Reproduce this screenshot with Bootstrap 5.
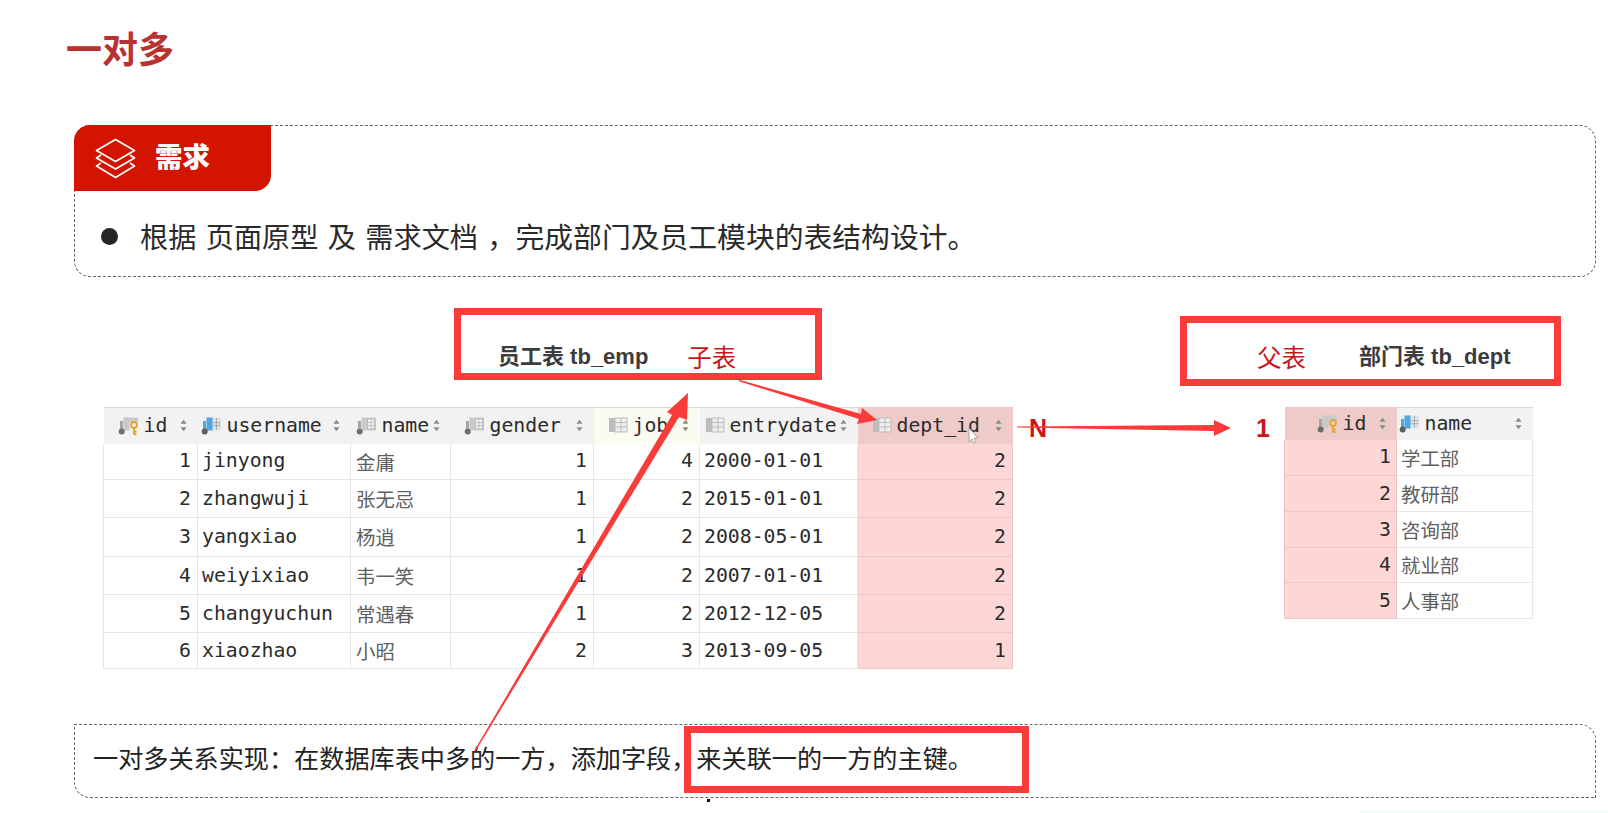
<!doctype html>
<html lang="zh">
<head>
<meta charset="utf-8">
<title>一对多</title>
<link rel="stylesheet" href="https://cdn.jsdelivr.net/npm/bootstrap@5.3.0/dist/css/bootstrap.min.css">
<style>
html,body{height:100%}
body{background:#fff;color:#222;font-family:"Liberation Sans","Noto Sans CJK SC",sans-serif;overflow:hidden}
.slide{position:relative;width:1608px;height:813px;padding:0 12px 0 74px}
.slide-title{height:125px;margin:0 0 0 -8px;padding-top:26px;font:700 36px/1.2 "Noto Sans CJK SC",sans-serif;color:#b93232}
.dash-box{border:1px dashed #666;border-radius:16px}
.need-box{height:152px}
.need-tab{width:197px;height:66px;margin:-1px 0 0 -1px;background:#d21400;color:#fff;border-radius:16px 0 16px 0;padding-left:21px;gap:19px}
.need-tab b{font:900 27.5px/1 "Noto Sans CJK SC",sans-serif;padding-bottom:4px}
.need-body{height:85px;padding:6px 0 0 26px;gap:22px;font:400 28.8px/1 "Noto Sans CJK SC",sans-serif;color:#2a2a2a}
.need-lead{font-size:28.2px;word-spacing:3px}
.need-dot{width:17px;height:17px;border-radius:50%;background:#262626;flex:none}
.label-row{margin:31px 0 0 380px;height:78px}
.red-box{border:7px solid #fb3a3a;flex:none}
.box-emp{width:368px;height:72px;padding:27px 0 0 37px}
.box-dept{width:381px;height:70px;margin:8px 0 0 358px;padding:12px 0 0 70px}
.tname{font:700 22px/1.4 "Liberation Sans","Noto Sans CJK SC",sans-serif;color:#3c3c3c}
.tkind{font:400 24.5px/1.4 "Noto Sans CJK SC",sans-serif;color:#c8161d}
.box-emp .tkind{margin-left:39px}
.box-dept .tname{margin-left:53px}
.tables-row{margin:21px 0 0 29px;height:261px}
.db-table{table-layout:fixed;border-collapse:collapse;font:400 19.8px/1 "DejaVu Sans Mono",monospace;color:#2b2b2b;background:#fff;flex:none}
.db-table th{padding:0;font-weight:400;background:#f2f2f2;border-top:1px solid #d8d8d8}
.db-table td{padding:0;border:1px solid #e6e6e6;border-top:0}
.db-table td.num{text-align:right;padding-right:6px}
.db-table td.txt{padding-left:4px}
.db-table td.cjk{padding-left:5px;font:400 19.4px/1 "Noto Sans CJK SC",sans-serif;color:#5f5f5f}
.db-table .pk{background:#fdd7d5;border-color:#f2c4c2}
.db-table th.pk{background:#eecbc8}
.db-table th.job-h{background:#fbfbf1}
.head-in{display:flex;align-items:center;padding-right:11px}
.head-in svg{flex:none}
.head-in .ico{margin-right:5px}
.head-in .srt{margin-left:auto}
.emp-tb{width:909px}
.dept-tb{width:248px}
.c94{width:94px}.c153{width:153px}.c100{width:100px}.c143{width:143px}.c106{width:106px}.c158{width:158px}.c155{width:155px}
.c112{width:112px}.c136{width:136px}
.pl2{padding-left:2px}.pl3{padding-left:3px}.pl5{padding-left:5px}.pl13{padding-left:13px}.pl14{padding-left:14px}.pl32{padding-left:32px}
.emp-tb thead tr{height:36px}
.emp-tb tbody tr:nth-child(1){height:36px}
.emp-tb tbody tr:nth-child(2){height:38px}
.emp-tb tbody tr:nth-child(3){height:39px}
.emp-tb tbody tr:nth-child(4){height:38px}
.emp-tb tbody tr:nth-child(5){height:38px}
.emp-tb tbody tr:nth-child(6){height:36px}
.dept-tb thead tr{height:32px}
.dept-tb tbody tr{height:36px}
.dept-tb tbody tr:nth-child(4){height:35px}
.dept-tb td.cjk{padding-left:4px}
.dept-tb td.num{padding-right:5px}
.gap-zone{width:271px;flex:none;height:36px;padding:9px 0 0 16px;color:#c8161d;font:700 25px/1 "Liberation Sans",sans-serif}
.gap-zone .one{margin-left:209px}
.note-box{height:74px;margin-top:56px;padding:0 0 6px 18px;font:400 25.15px/1 "Noto Sans CJK SC",sans-serif;color:#222;border-radius:0 16px 0 16px}
.overlay{position:absolute;left:0;top:0;pointer-events:none}
.note-mark{position:absolute;left:684px;top:726px;width:345px;height:67px}
.tiny-dot{position:absolute;left:707px;top:799px;width:3px;height:3px;background:#111}
.tint-strip{position:absolute;left:1360px;top:810px;width:248px;height:3px;background:#f3fefc}
</style>
</head>
<body>
<svg width="0" height="0" class="d-block">
<defs>
<symbol id="i-col" viewBox="0 0 20 18"><rect x="5" y="0.5" width="14.5" height="13" fill="#c9c9c9"/><rect x="11" y="2" width="7" height="10" fill="#f4f4f4" stroke="#b5b5b5" stroke-width=".8"/><path d="M11 5.500h7M11 8.700h7M14.500 2v10" stroke="#b5b5b5" stroke-width=".8"/><circle cx="3.200" cy="14.500" r="3" fill="#6e6e6e"/><rect x="1.500" y="4" width="3" height="8" fill="#a5a5a5"/></symbol>
<symbol id="i-colb" viewBox="0 0 20 18"><rect x="5" y="0.500" width="14.500" height="13" fill="#dfe3e8"/><rect x="5" y="0.500" width="6" height="13" fill="#4fa8e0"/><path d="M11 5.500h8M11 8.700h8M15 1v12" stroke="#9aa3ab" stroke-width=".8"/><rect x="1.500" y="4" width="3" height="8" fill="#4fa8e0"/><circle cx="3.200" cy="14.500" r="3" fill="#5f5f5f"/></symbol>
<symbol id="i-key" viewBox="0 0 20 18"><rect x="5" y="0.500" width="14.500" height="5" fill="#c9c9c9"/><rect x="5" y="0.500" width="6" height="13" fill="#c9c9c9"/><rect x="1.500" y="4" width="3" height="8" fill="#a5a5a5"/><circle cx="3.200" cy="14.500" r="3" fill="#6e6e6e"/><circle cx="15.500" cy="8" r="3" fill="none" stroke="#e6a32e" stroke-width="1.8"/><path d="M15.500 11v6.500M15.500 14.500h2.500M15.500 17h2.500" stroke="#e6a32e" stroke-width="1.8" fill="none"/></symbol>
<symbol id="i-tb" viewBox="0 0 20 18"><rect x="1" y="1" width="6" height="14" fill="#bdbdbd"/><rect x="7" y="1" width="12" height="14" fill="#eee" stroke="#bdbdbd"/><path d="M7 5.500h12M7 10h12M13 1v14" stroke="#bdbdbd"/></symbol>
<symbol id="i-srt" viewBox="0 0 8 14"><path d="M4 0.500 7.500 5H.5zM4 13.500.5 9h7z" fill="#8a8a8a"/></symbol>
</defs>
</svg>
<main class="slide">
  <h1 class="slide-title">一对多</h1>

  <section class="dash-box need-box">
    <div class="need-tab d-flex align-items-center">
      <svg width="41" height="41" viewBox="0 0 41 41" fill="none" stroke="#fff" stroke-width="1.7" stroke-linejoin="round"><path d="M20.500 1.500 39.500 12.500 20.500 23.500 1.500 12.500Z"/><path d="M6 17 1.500 20 20.500 31 39.500 20 35 17"/><path d="M6 25 1.500 28 20.500 39.500 39.500 28 35 25"/></svg>
      <b>需求</b>
    </div>
    <div class="need-body d-flex align-items-center">
      <span class="need-dot"></span>
      <span><span class="need-lead">根据 页面原型 及 需求文档 ，</span>完成部门及员工模块的表结构设计。</span>
    </div>
  </section>

  <div class="label-row d-flex align-items-start">
    <div class="red-box box-emp d-flex align-items-center"><span class="tname">员工表 tb_emp</span><span class="tkind">子表</span></div>
    <div class="red-box box-dept d-flex align-items-center"><span class="tkind">父表</span><span class="tname">部门表 tb_dept</span></div>
  </div>

  <div class="tables-row d-flex align-items-start">
    <table class="db-table emp-tb">
      <colgroup><col class="c94"><col class="c153"><col class="c100"><col class="c143"><col class="c106"><col class="c158"><col class="c155"></colgroup>
      <thead><tr>
        <th><div class="head-in pl14"><svg class="ico" width="21" height="18"><use href="#i-key"/></svg>id<svg class="srt" width="7" height="13"><use href="#i-srt"/></svg></div></th>
        <th><div class="head-in pl3"><svg class="ico" width="21" height="18"><use href="#i-colb"/></svg>username<svg class="srt" width="7" height="13"><use href="#i-srt"/></svg></div></th>
        <th><div class="head-in pl5"><svg class="ico" width="21" height="18"><use href="#i-col"/></svg>name<svg class="srt" width="7" height="13"><use href="#i-srt"/></svg></div></th>
        <th><div class="head-in pl13"><svg class="ico" width="21" height="18"><use href="#i-col"/></svg>gender<svg class="srt" width="7" height="13"><use href="#i-srt"/></svg></div></th>
        <th class="job-h"><div class="head-in pl14"><svg class="ico" width="20" height="18"><use href="#i-tb"/></svg>job<svg class="srt" width="7" height="13"><use href="#i-srt"/></svg></div></th>
        <th><div class="head-in pl5"><svg class="ico" width="20" height="18"><use href="#i-tb"/></svg>entrydate<svg class="srt" width="7" height="13"><use href="#i-srt"/></svg></div></th>
        <th class="pk"><div class="head-in pl14"><svg class="ico" width="20" height="18"><use href="#i-tb"/></svg>dept_id<svg class="srt" width="7" height="13"><use href="#i-srt"/></svg></div></th>
      </tr></thead>
      <tbody>
        <tr><td class="num">1</td><td class="txt">jinyong</td><td class="cjk">金庸</td><td class="num">1</td><td class="num">4</td><td class="txt">2000-01-01</td><td class="num pk">2</td></tr>
        <tr><td class="num">2</td><td class="txt">zhangwuji</td><td class="cjk">张无忌</td><td class="num">1</td><td class="num">2</td><td class="txt">2015-01-01</td><td class="num pk">2</td></tr>
        <tr><td class="num">3</td><td class="txt">yangxiao</td><td class="cjk">杨逍</td><td class="num">1</td><td class="num">2</td><td class="txt">2008-05-01</td><td class="num pk">2</td></tr>
        <tr><td class="num">4</td><td class="txt">weiyixiao</td><td class="cjk">韦一笑</td><td class="num">1</td><td class="num">2</td><td class="txt">2007-01-01</td><td class="num pk">2</td></tr>
        <tr><td class="num">5</td><td class="txt">changyuchun</td><td class="cjk">常遇春</td><td class="num">1</td><td class="num">2</td><td class="txt">2012-12-05</td><td class="num pk">2</td></tr>
        <tr><td class="num">6</td><td class="txt">xiaozhao</td><td class="cjk">小昭</td><td class="num">2</td><td class="num">3</td><td class="txt">2013-09-05</td><td class="num pk">1</td></tr>
      </tbody>
    </table>

    <div class="gap-zone"><span>N</span><span class="one">1</span></div>

    <table class="db-table dept-tb">
      <colgroup><col class="c112"><col class="c136"></colgroup>
      <thead><tr>
        <th class="pk"><div class="head-in pl32"><svg class="ico" width="21" height="18"><use href="#i-key"/></svg>id<svg class="srt" width="7" height="13"><use href="#i-srt"/></svg></div></th>
        <th><div class="head-in pl2"><svg class="ico" width="21" height="18"><use href="#i-colb"/></svg>name<svg class="srt" width="7" height="13"><use href="#i-srt"/></svg></div></th>
      </tr></thead>
      <tbody>
        <tr><td class="num pk">1</td><td class="cjk">学工部</td></tr>
        <tr><td class="num pk">2</td><td class="cjk">教研部</td></tr>
        <tr><td class="num pk">3</td><td class="cjk">咨询部</td></tr>
        <tr><td class="num pk">4</td><td class="cjk">就业部</td></tr>
        <tr><td class="num pk">5</td><td class="cjk">人事部</td></tr>
      </tbody>
    </table>
  </div>

  <section class="dash-box note-box d-flex align-items-center">一对多关系实现：在数据库表中多的一方，添加字段，来关联一的一方的主键。</section>

  <div class="red-box note-mark"></div>
  <div class="tiny-dot"></div>
  <div class="tint-strip"></div>

  <svg class="overlay" width="1608" height="813" viewBox="0 0 1608 813">
    <polygon fill="#fb3a3a" points="474,751 672,415 667,412 688,393 687,420 679,417 475,752"/>
    <polygon fill="#fb3a3a" points="740,380 861,414 862,408 877,420 857,424 859,419 738,381"/>
    <polygon fill="#fb3a3a" points="1017,426.500 1214,425 1214,420 1231,428 1214,436 1214,431 1017,427.500"/>
    <path d="M969 428v14l3-3 2 4 2-1-2-4h4z" fill="#fff" stroke="#999" stroke-width=".8"/>
  </svg>
</main>
<script src="https://cdn.jsdelivr.net/npm/bootstrap@5.3.0/dist/js/bootstrap.bundle.min.js"></script>
</body>
</html>
